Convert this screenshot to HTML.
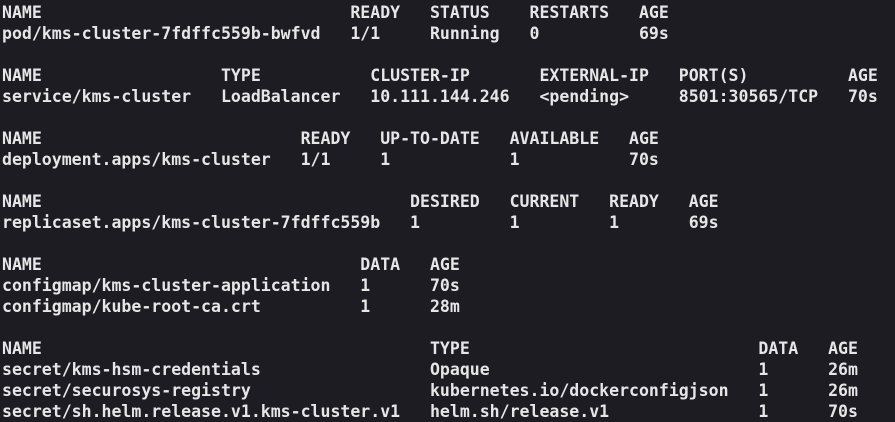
<!DOCTYPE html>
<html><head><style>
html,body{margin:0;padding:0;background:#1d1c23;width:895px;height:422px;overflow:hidden}
pre{margin:0;position:absolute;left:2px;top:2px;font-family:"DejaVu Sans Mono","Liberation Mono",monospace;font-weight:bold;font-size:16.55px;line-height:21px;color:#e6e6e6;white-space:pre}
</style></head><body>
<pre>NAME                               READY   STATUS    RESTARTS   AGE
pod/kms-cluster-7fdffc559b-bwfvd   1/1     Running   0          69s

NAME                  TYPE           CLUSTER-IP       EXTERNAL-IP   PORT(S)          AGE
service/kms-cluster   LoadBalancer   10.111.144.246   &lt;pending&gt;     8501:30565/TCP   70s

NAME                          READY   UP-TO-DATE   AVAILABLE   AGE
deployment.apps/kms-cluster   1/1     1            1           70s

NAME                                     DESIRED   CURRENT   READY   AGE
replicaset.apps/kms-cluster-7fdffc559b   1         1         1       69s

NAME                                DATA   AGE
configmap/kms-cluster-application   1      70s
configmap/kube-root-ca.crt          1      28m

NAME                                       TYPE                             DATA   AGE
secret/kms-hsm-credentials                 Opaque                           1      26m
secret/securosys-registry                  kubernetes.io/dockerconfigjson   1      26m
secret/sh.helm.release.v1.kms-cluster.v1   helm.sh/release.v1               1      70s</pre>
</body></html>
